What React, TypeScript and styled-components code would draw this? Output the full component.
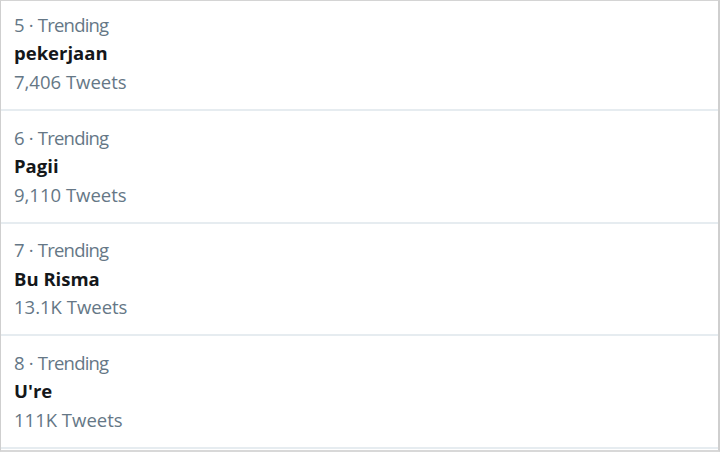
import React from "react";
import styled, { createGlobalStyle } from "styled-components";

const Global = createGlobalStyle`
  html, body { margin: 0; padding: 0; background: #ffffff; }
  body { font-family: "Open Sans", "Noto Sans", Arial, sans-serif; }
`;

const Frame = styled.div`
  width: 720px;
  height: 452px;
  box-sizing: border-box;
  border-left: 1px solid #cfcfcf;
  border-right: 2px solid #cfcfcf;
  border-top: 1px solid #d4d4d4;
  border-bottom: 2px solid #d8d8d8;
  overflow: hidden;
  display: flex;
  flex-direction: column;
`;

const List = styled.div`
  display: flex;
  flex-direction: column;
`;

const Row = styled.div<{ $first?: boolean }>`
  box-sizing: border-box;
  height: ${(p) => (p.$first ? "110px" : "112.67px")};
  padding: ${(p) => (p.$first ? "9.5px" : "12.5px")} 14px 0 13px;
  border-bottom: 2px solid #e6ecf0;
  display: flex;
  flex-direction: column;
  font-size: 18.5px;
  line-height: 28.5px;
`;

const Meta = styled.div`
  color: #657786;
  letter-spacing: -0.8px;
  word-spacing: 1px;
`;

const Name = styled.div`
  color: #14171a;
  font-weight: 700;
`;

const Count = styled.div`
  color: #657786;
`;

const trends = [
  { rank: 5, name: "pekerjaan", count: "7,406 Tweets" },
  { rank: 6, name: "Pagii", count: "9,110 Tweets" },
  { rank: 7, name: "Bu Risma", count: "13.1K Tweets" },
  { rank: 8, name: "U're", count: "111K Tweets" },
];

export default function App() {
  return (
    <>
      <Global />
      <Frame>
        <List>
          {trends.map((t, i) => (
            <Row key={t.rank} $first={i === 0}>
              <Meta>{`${t.rank} · Trending`}</Meta>
              <Name>{t.name}</Name>
              <Count>{t.count}</Count>
            </Row>
          ))}
        </List>
      </Frame>
    </>
  );
}
